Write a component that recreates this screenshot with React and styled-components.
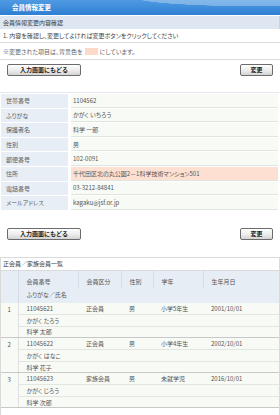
import React from "react";
import styled, { createGlobalStyle } from "styled-components";

const GlobalStyle = createGlobalStyle`
  html, body {
    margin: 0;
    padding: 0;
    background: #ffffff;
  }
  body {
    font-family: "Noto Sans CJK JP", "Noto Sans", sans-serif;
    font-size: 6px;
    color: #4a4a4a;
    font-feature-settings: "palt";
  }
`;

const parentRows = [
  { label: "世帯番号", value: "1104562" },
  { label: "ふりがな", value: "かがく いちろう" },
  { label: "保護者名", value: "科学 一郎" },
  { label: "性別", value: "男" },
  { label: "郵便番号", value: "102-0091" },
  { label: "住所", value: "千代田区北の丸公園2－1科学技術マンション501", changed: true },
  { label: "電話番号", value: "03-3212-84841" },
  { label: "メールアドレス", value: "kagaku@jsf.or.jp" },
];

const members = [
  { no: 1, id: "11045621", kind: "正会員", sex: "男", grade: "小学5年生", birth: "2001/10/01", kana: "かがく たろう", name: "科学 太郎" },
  { no: 2, id: "11045622", kind: "正会員", sex: "男", grade: "小学4年生", birth: "2002/10/01", kana: "かがく はなこ", name: "科学 花子" },
  { no: 3, id: "11045623", kind: "家族会員", sex: "男", grade: "未就学児", birth: "2016/10/01", kana: "かがく じろう", name: "科学 次郎" },
];

function ButtonBar({ top, height }) {
  return (
    <ButtonRow $top={top} $h={height}>
      <Button $w={74}>入力画面にもどる</Button>
      <Button $w={33}>変更</Button>
    </ButtonRow>
  );
}

export default function App() {
  return (
    <Page>
      <GlobalStyle />
      <TitleBar>会員情報変更</TitleBar>
      <SubBar>会員情報変更内容確認</SubBar>
      <Note $h={13}>1. 内容を確認し、変更してよければ変更ボタンをクリックしてください</Note>
      <Note $h={16} $muted>
        ※変更された項目は、背景色を<Swatch />にしています。
      </Note>
      <ButtonBar top={4} height={32} />

      <InfoTable>
        <tbody>
          {parentRows.map((r) => (
            <tr key={r.label}>
              <Label>{r.label}</Label>
              <Value $changed={r.changed}>{r.value}</Value>
            </tr>
          ))}
        </tbody>
      </InfoTable>

      <ButtonBar top={17} height={46} />

      <ListBox>
        <ListTitle>正会員／家族会員一覧</ListTitle>
        <MemberTable>
          <colgroup>
            <col style={{ width: 17 }} />
            <col style={{ width: 60 }} />
            <col style={{ width: 43 }} />
            <col style={{ width: 32 }} />
            <col style={{ width: 50 }} />
            <col />
          </colgroup>
          <thead>
            <tr>
              <HeadCell rowSpan={2} />
              <HeadCell $first>会員番号</HeadCell>
              <HeadCell $first>会員区分</HeadCell>
              <HeadCell $first>性別</HeadCell>
              <HeadCell $first>学年</HeadCell>
              <HeadCell $first>生年月日</HeadCell>
            </tr>
            <tr>
              <HeadCell colSpan={5}>ふりがな／氏名</HeadCell>
            </tr>
          </thead>
          <tbody>
            {members.map((m) => (
              <React.Fragment key={m.id}>
                <tr>
                  <NoCell rowSpan={3}>{m.no}</NoCell>
                  <Cell>{m.id}</Cell>
                  <Cell>{m.kind}</Cell>
                  <Cell>{m.sex}</Cell>
                  <Cell>{m.grade}</Cell>
                  <Cell>{m.birth}</Cell>
                </tr>
                <tr>
                  <Cell colSpan={5}>{m.kana}</Cell>
                </tr>
                <tr>
                  <Cell colSpan={5} $last>{m.name}</Cell>
                </tr>
              </React.Fragment>
            ))}
          </tbody>
        </MemberTable>
      </ListBox>
    </Page>
  );
}

const Page = styled.div`
  width: 280px;
  height: 415px;
  overflow: hidden;
  display: flex;
  flex-direction: column;
`;

const TitleBar = styled.div`
  flex: none;
  height: 15px;
  line-height: 15px;
  padding-left: 12px;
  color: #ffffff;
  font-weight: bold;
  font-size: 6.5px;
  background:
    radial-gradient(ellipse 170px 13px at 255px -3px, rgba(255, 255, 255, 0.3) 0%, rgba(255, 255, 255, 0.3) 70%, rgba(255, 255, 255, 0) 72%),
    linear-gradient(180deg, #4f9ae2 0%, #2f7fd2 100%);
`;

const SubBar = styled.div`
  flex: none;
  margin-top: 1px;
  height: 13px;
  line-height: 13px;
  padding-left: 3px;
  background: #dde6f1;
  border-right: 1px solid #c9d4e2;
  color: #3a3a3a;
`;

const Note = styled.div`
  flex: none;
  display: flex;
  align-items: center;
  height: ${(p) => p.$h}px;
  padding: 0 3px;
  border-bottom: 1px solid #dcdcdc;
  color: ${(p) => (p.$muted ? "#666" : "#444")};
`;

const Swatch = styled.span`
  display: inline-block;
  width: 13px;
  height: 7px;
  margin: 0 2px;
  background: #fcd9c8;
`;

const ButtonRow = styled.div`
  flex: none;
  display: flex;
  justify-content: space-between;
  align-items: flex-start;
  padding: ${(p) => p.$top}px 7px 0 7px;
  height: ${(p) => p.$h}px;
  box-sizing: border-box;
`;

const Button = styled.button`
  width: ${(p) => p.$w}px;
  height: 12px;
  padding: 0;
  border: 1px solid #6c6c6c;
  border-radius: 2px;
  background: linear-gradient(180deg, #ffffff 0%, #ececec 55%, #d4d4d4 100%);
  font-family: inherit;
  font-size: 6px;
  font-weight: bold;
  color: #1a1a1a;
  line-height: 10px;
`;

const InfoTable = styled.table`
  flex: none;
  width: 279px;
  border-collapse: separate;
  border-spacing: 1px;
  border-top: 1px solid #e4e8ee;
`;

const Label = styled.td`
  width: 62px;
  height: 13.6px;
  padding: 0 0 0 5px;
  background: #e7eef6;
  color: #5a5a5a;
  border-right: 2px solid #ffffff;
  white-space: nowrap;
`;

const Value = styled.td`
  padding: 0 0 0 2px;
  background: ${(p) => (p.$changed ? "#fde0d2" : "#f7faf5")};
  border-bottom: 1px solid #dfe6df;
  color: #555;
  white-space: nowrap;
`;

const ListBox = styled.div`
  flex: 1;
  width: 278px;
  border: 1px solid #dadada;
  border-bottom: none;
`;

const ListTitle = styled.div`
  height: 12px;
  line-height: 12px;
  padding-left: 2px;
  color: #3a3a3a;
  border-bottom: 1px solid #dadada;
`;

const MemberTable = styled.table`
  width: 100%;
  table-layout: fixed;
  border-collapse: collapse;
`;

const HeadCell = styled.th`
  height: ${(p) => (p.$first ? 17 : 15)}px;
  padding: ${(p) => (p.$first ? "4px 0 0 8px" : "0 0 2px 8px")};
  box-sizing: border-box;
  text-align: left;
  font-weight: normal;
  color: #555;
  background: #e6edf5;
  border-left: 1px solid #d4dce6;
  white-space: nowrap;
  &:first-child {
    border-left: none;
  }
  tr:first-child &:first-child {
    border-right: 1px solid #d4dce6;
  }
`;

const NoCell = styled.td`
  text-align: center;
  vertical-align: top;
  padding-top: 2px;
  color: #555;
  background: #f8faf5;
  border-right: 1px solid #e0e0e0;
  border-bottom: 1px solid #c8c8c8;
`;

const Cell = styled.td`
  height: 11.7px;
  padding: 0 0 0 8px;
  box-sizing: border-box;
  white-space: nowrap;
  color: #555;
  background: #f8faf5;
  border-bottom: 1px solid ${(p) => (p.$last ? "#c8c8c8" : "#e2e6e0")};
`;
